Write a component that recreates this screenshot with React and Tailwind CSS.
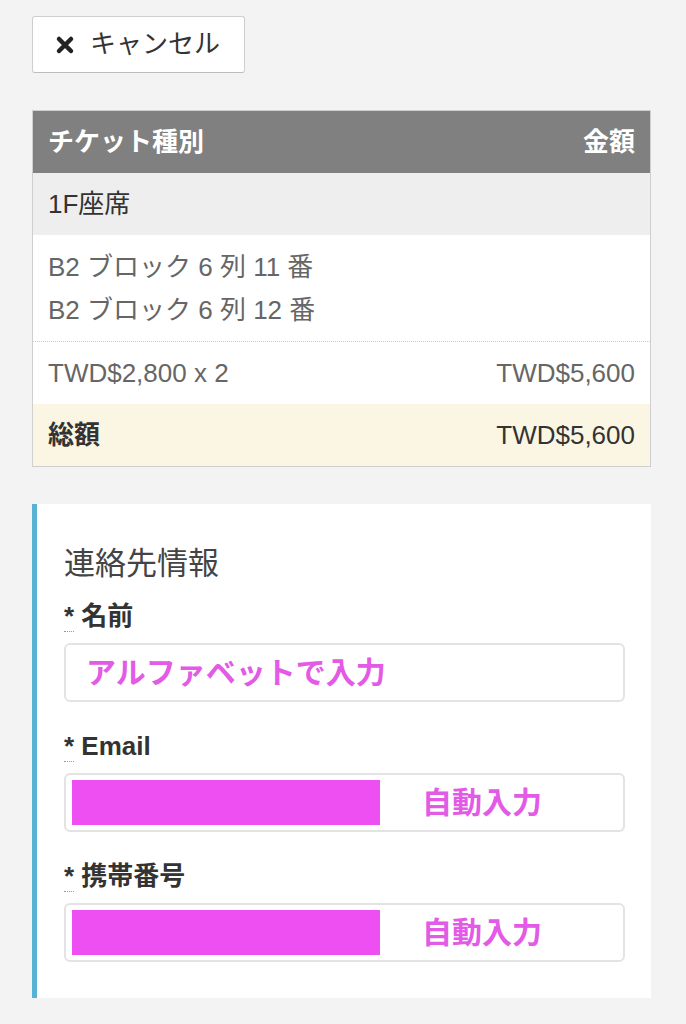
import { useState } from 'react'

const font = { fontFamily: '"Liberation Sans", "Noto Sans CJK JP", sans-serif' }

function CancelButton() {
  return (
    <button className="flex h-[57px] w-[213px] items-center rounded-[3px] border border-[#cfcfcf] border-b-[#bdbdbd] bg-white pl-[22px] text-[26px] text-[#333]">
      <svg width="20" height="20" viewBox="0 0 20 20" className="mr-[15px]">
        <path d="M4 4 L16 16 M16 4 L4 16" stroke="#222" strokeWidth="4.5" strokeLinecap="round" />
      </svg>
      キャンセル
    </button>
  )
}

function Row({ left, right, className = '', textClass = '' }) {
  return (
    <div className={'flex h-[62px] items-center justify-between px-[15px] text-[26px] ' + className}>
      <span className={textClass}>{left}</span>
      {right && <span className={textClass}>{right}</span>}
    </div>
  )
}

function Field({ label, first, children }) {
  return (
    <div className={first ? 'mt-[17px]' : 'mt-[29px]'}>
      <div className="h-[30px] text-[26px] font-bold leading-[30px] text-[#333]">
        <span className="border-b border-dotted border-[#999]">*</span> {label}
      </div>
      <div className="mt-[12px] flex h-[59px] items-center rounded-[6px] border-2 border-[#e3e3e3] bg-white">
        {children}
      </div>
    </div>
  )
}

function AutoFill() {
  return (
    <>
      <div className="ml-[6px] h-[45px] w-[308px] bg-[#ee4ff2]" />
      <span className="ml-[42px] text-[30px] font-bold text-[#e25ae6]">自動入力</span>
    </>
  )
}

export default function App() {
  const [seats] = useState(['B2 ブロック 6 列 11 番', 'B2 ブロック 6 列 12 番'])

  return (
    <div className="min-h-[1024px] bg-[#f3f3f3] pl-8 pr-[35px] pt-4 pb-8" style={font}>
      <CancelButton />

      {/* チケット */}
      <div className="mt-[37px] border border-[#cfcfcf]">
        <Row
          left="チケット種別"
          right="金額"
          className="bg-[#808080]"
          textClass="font-bold text-white"
        />
        <Row left="1F座席" className="bg-[#eeeeee]" textClass="text-[#333]" />
        <div className="flex h-[107px] flex-col justify-center gap-[13px] border-b border-dotted border-[#ccc] bg-white px-[15px] text-[26px] leading-[30px] text-[#666]">
          {seats.map((s) => (
            <div key={s}>{s}</div>
          ))}
        </div>
        <Row
          left="TWD$2,800 x 2"
          right="TWD$5,600"
          className="bg-white"
          textClass="text-[#666]"
        />
        <div className="flex h-[62px] items-center justify-between bg-[#fbf6e3] px-[15px] text-[26px] text-[#333]">
          <span className="font-bold">総額</span>
          <span>TWD$5,600</span>
        </div>
      </div>

      {/* 連絡先情報 */}
      <div className="mt-[37px] border-l-[5px] border-[#58b2d3] bg-white pb-[36px] pl-[27px] pr-[26px] pt-[40px]">
        <h2 className="h-[40px] text-[31px] leading-[40px] text-[#444]">連絡先情報</h2>
        <Field label="名前" first>
          <span className="ml-[20px] text-[30px] font-bold text-[#e25ae6]">アルファベットで入力</span>
        </Field>
        <Field label="Email">
          <AutoFill />
        </Field>
        <Field label="携帯番号">
          <AutoFill />
        </Field>
      </div>
    </div>
  )
}
